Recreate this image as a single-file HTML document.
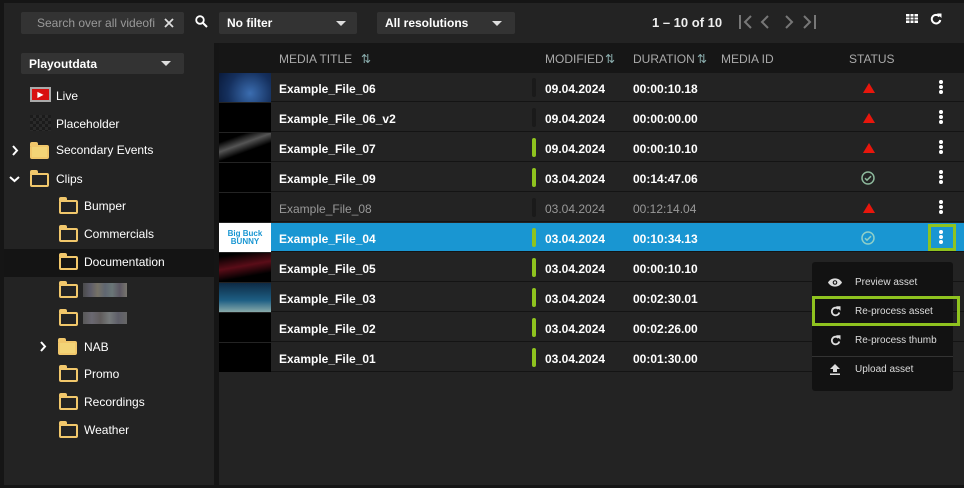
<!DOCTYPE html><html><head><style>
*{box-sizing:border-box;margin:0;padding:0}
body{width:964px;height:488px;background:#151515;font-family:"Liberation Sans",Arial,sans-serif;font-size:12px;color:#fff;position:relative;overflow:hidden}
.a{position:absolute}
.top{left:4px;top:3px;width:960px;height:40px;background:#232323}
.box{background:#333;border-radius:2px;height:22px;top:12px}
.left{left:4px;top:43px;width:210px;height:442px;background:#232323}
.tbl{left:219px;top:43px;width:745px;height:442px;background:#232323}
.hdr{left:219px;top:43px;width:745px;height:30px;background:#161616;color:#aaa;font-size:12px}
.row{left:219px;width:745px;height:29px;background:#232323;border-bottom:1px solid #141414}
.row span{position:absolute;top:9px;font-weight:bold;font-size:12px}
.th{position:absolute;left:0;top:0;width:52px;height:29px;background:#000}
.bar{position:absolute;left:313px;top:5px;width:4px;height:19px;border-radius:2px;background:#1a1a1a}
.g{background:#8fc31f}
.dots{position:absolute;left:720px;top:7px;width:4px}
.dots i{display:block;width:4px;height:4px;border-radius:2px;background:#fff;margin-bottom:1px}
.tri{position:absolute;left:644px;top:10px;width:0;height:0;border-left:6px solid transparent;border-right:6px solid transparent;border-bottom:10px solid #e8160c}
.ok{position:absolute;left:642px;top:8px}
.ti{left:60px}
.f{position:absolute;width:19px;height:14px;border:2px solid #f1c76b;border-radius:2px}
.f:before{content:"";position:absolute;left:-2px;top:-5px;width:8px;height:4px;background:#f1c76b;border-radius:2px 2px 0 0}
.ff{background:#f3d477}
.lbl{position:absolute;font-size:12px}
.menu{left:812px;top:262px;width:141px;height:129px;background:#121212;border-radius:3px}
.mi{position:absolute;left:43px;font-size:10px;color:#ddd}
</style></head><body>
<div class="a top"></div>
<div class="a box" style="left:21px;width:163px"><span style="position:absolute;left:16px;top:4px;color:#999;font-size:12px">Search over all videofi</span><svg style="position:absolute;left:143px;top:6px" width="10" height="10"><path d="M1 1l8 8M9 1l-8 8" stroke="#ddd" stroke-width="1.8"/></svg></div>
<svg class="a" style="left:195px;top:15px" width="13" height="13"><circle cx="5" cy="5" r="3.8" fill="none" stroke="#fff" stroke-width="1.8"/><path d="M8 8l4 4" stroke="#fff" stroke-width="2"/></svg>
<div class="a box" style="left:219px;width:138px"><span style="position:absolute;left:8px;top:4px;font-weight:bold">No filter</span><span style="position:absolute;left:117px;top:9px;border:5px solid transparent;border-top:5px solid #ddd"></span></div>
<div class="a box" style="left:377px;width:138px"><span style="position:absolute;left:8px;top:4px;font-weight:bold">All resolutions</span><span style="position:absolute;left:115px;top:9px;border:5px solid transparent;border-top:5px solid #ddd"></span></div>
<div class="a" style="left:652px;top:15px;font-weight:bold;font-size:13px;color:#eee">1 – 10 of 10</div>
<svg class="a" style="left:738px;top:14px" width="80" height="16" fill="none" stroke="#777" stroke-width="2"><path d="M2 1v14M13 2l-6 6 6 6M30 2l-6 6 6 6M48 2l6 6-6 6M66 2l6 6-6 6M77 1v14"/></svg>
<svg class="a" style="left:906px;top:14px" width="12" height="9"><rect width="12" height="9" fill="#fff"/><path d="M4 0v9M8 0v9M0 3h12M0 6h12" stroke="#232323" stroke-width="1"/></svg>
<svg class="a" style="left:930px;top:13px" width="12" height="12"><path d="M9.5 3.5A4.3 4.3 0 1 0 10.3 7" fill="none" stroke="#fff" stroke-width="2"/><path d="M7 0.5h4.5v4.5z" fill="#fff"/></svg>

<div class="a left"></div>
<div class="a" style="left:21px;top:53px;width:163px;height:21px;background:#333;border-radius:2px"><span style="position:absolute;left:8px;top:4px;font-weight:bold">Playoutdata</span><span style="position:absolute;left:140px;top:8px;border:5px solid transparent;border-top:5px solid #ddd"></span></div>
<div class="a" style="left:30px;top:87px;width:21px;height:15px;background:#aaa;padding:2px"><div style="width:17px;height:11px;background:#d81010;color:#fff;font-size:8px;line-height:11px;text-align:center">▶</div></div>
<div class="lbl" style="left:56px;top:89px">Live</div>
<div class="a" style="left:30px;top:115px;width:21px;height:16px;background:repeating-conic-gradient(#2a2a2a 0 25%,#1b1b1b 0 50%) 0 0/6px 6px"></div>
<div class="lbl" style="left:56px;top:117px">Placeholder</div>
<svg class="a" style="left:11px;top:145px" width="8" height="11"><path d="M2 1l4 4.5L2 10" fill="none" stroke="#fff" stroke-width="2"/></svg>
<div class="f ff" style="left:30px;top:145px"></div><div class="lbl" style="left:56px;top:143px">Secondary Events</div>
<svg class="a" style="left:9px;top:175px" width="11" height="8"><path d="M1 2l4.5 4L10 2" fill="none" stroke="#fff" stroke-width="2"/></svg>
<div class="f" style="left:30px;top:173px"></div><div class="lbl" style="left:56px;top:172px">Clips</div>
<div class="a" style="left:4px;top:249px;width:210px;height:28px;background:#141414"></div>
<div class="f" style="left:59px;top:200px"></div><div class="lbl" style="left:84px;top:199px">Bumper</div>
<div class="f" style="left:59px;top:228px"></div><div class="lbl" style="left:84px;top:227px">Commercials</div>
<div class="f" style="left:59px;top:256px"></div><div class="lbl" style="left:84px;top:255px">Documentation</div>
<div class="f" style="left:59px;top:284px"></div><div class="a" style="left:83px;top:283px;width:44px;height:14px;background:linear-gradient(90deg,#555,#6b6a7a,#8a8577,#6f7784,#7b8a8b,#6a6473,#8d8a80);opacity:.8"></div>
<div class="f" style="left:59px;top:312px"></div><div class="a" style="left:83px;top:312px;width:44px;height:12px;background:linear-gradient(90deg,#666,#7c7a85,#6f6a6a,#8a8f90,#6d6d7a,#777);opacity:.8"></div>
<svg class="a" style="left:39px;top:341px" width="8" height="11"><path d="M2 1l4 4.5L2 10" fill="none" stroke="#fff" stroke-width="2"/></svg>
<div class="f ff" style="left:58px;top:341px"></div><div class="lbl" style="left:84px;top:340px">NAB</div>
<div class="f" style="left:59px;top:368px"></div><div class="lbl" style="left:84px;top:367px">Promo</div>
<div class="f" style="left:59px;top:396px"></div><div class="lbl" style="left:84px;top:395px">Recordings</div>
<div class="f" style="left:59px;top:424px"></div><div class="lbl" style="left:84px;top:423px">Weather</div>

<div class="a tbl"></div>
<div class="a hdr"><span style="position:absolute;left:60px;top:9px">MEDIA TITLE</span><span style="position:absolute;left:142px;top:9px;color:#8aa">⇅</span><span style="position:absolute;left:326px;top:9px">MODIFIED</span><span style="position:absolute;left:386px;top:9px;color:#8aa">⇅</span><span style="position:absolute;left:414px;top:9px">DURATION</span><span style="position:absolute;left:478px;top:9px;color:#8aa">⇅</span><span style="position:absolute;left:502px;top:9px">MEDIA ID</span><span style="position:absolute;left:630px;top:9px">STATUS</span></div>

<div class="a row" style="top:73px"><div class="th" style="background:radial-gradient(circle at 60% 70%,#3b6db0,#15305e 60%,#0a1a3a)"></div><span class="ti">Example_File_06</span><div class="bar"></div><span style="left:326px">09.04.2024</span><span style="left:414px">00:00:10.18</span><div class="tri"></div><div class="dots"><i></i><i></i><i></i></div></div>
<div class="a row" style="top:103px"><div class="th"></div><span class="ti">Example_File_06_v2</span><div class="bar"></div><span style="left:326px">09.04.2024</span><span style="left:414px">00:00:00.00</span><div class="tri"></div><div class="dots"><i></i><i></i><i></i></div></div>
<div class="a row" style="top:133px"><div class="th" style="background:linear-gradient(160deg,#000 20%,#555 40%,#000 60%)"></div><span class="ti">Example_File_07</span><div class="bar g"></div><span style="left:326px">09.04.2024</span><span style="left:414px">00:00:10.10</span><div class="tri"></div><div class="dots"><i></i><i></i><i></i></div></div>
<div class="a row" style="top:163px"><div class="th"></div><span class="ti">Example_File_09</span><div class="bar g"></div><span style="left:326px">03.04.2024</span><span style="left:414px">00:14:47.06</span><svg class="ok" width="14" height="14"><circle cx="7" cy="7" r="6" fill="none" stroke="#8cb89c" stroke-width="1.5"/><path d="M4 7.2l2 2 4-4" fill="none" stroke="#8cb89c" stroke-width="1.5"/></svg><div class="dots"><i></i><i></i><i></i></div></div>
<div class="a row" style="top:193px;color:#999"><div class="th"></div><span class="ti" style="font-weight:normal">Example_File_08</span><div class="bar"></div><span style="left:326px;font-weight:normal">03.04.2024</span><span style="left:414px;font-weight:normal">00:12:14.04</span><div class="tri"></div><div class="dots"><i></i><i></i><i></i></div></div>
<div class="a row" style="top:223px;background:#1996d2"><div class="th" style="background:#fff;color:#1996d2;font-size:8px;font-weight:bold;text-align:center;line-height:8px;padding-top:7px">Big Buck<br>BUNNY</div><span class="ti">Example_File_04</span><div class="bar g"></div><span style="left:326px">03.04.2024</span><span style="left:414px">00:10:34.13</span><svg class="ok" width="14" height="14"><circle cx="7" cy="7" r="6" fill="none" stroke="#8fcfc8" stroke-width="1.5"/><path d="M4 7.2l2 2 4-4" fill="none" stroke="#8fcfc8" stroke-width="1.5"/></svg><div style="position:absolute;left:709px;top:1px;width:28px;height:27px;border:3px solid #8fc31f"></div><div class="dots"><i></i><i></i><i></i></div></div>
<div class="a row" style="top:253px"><div class="th" style="background:linear-gradient(170deg,#000 10%,#5a0d18 45%,#000 75%)"></div><span class="ti">Example_File_05</span><div class="bar g"></div><span style="left:326px">03.04.2024</span><span style="left:414px">00:00:10.10</span></div>
<div class="a row" style="top:283px"><div class="th" style="background:linear-gradient(180deg,#0d2a44,#1e5f84 60%,#8aa 100%)"></div><span class="ti">Example_File_03</span><div class="bar g"></div><span style="left:326px">03.04.2024</span><span style="left:414px">00:02:30.01</span></div>
<div class="a row" style="top:313px"><div class="th"></div><span class="ti">Example_File_02</span><div class="bar g"></div><span style="left:326px">03.04.2024</span><span style="left:414px">00:02:26.00</span></div>
<div class="a row" style="top:343px"><div class="th"></div><span class="ti">Example_File_01</span><div class="bar g"></div><span style="left:326px">03.04.2024</span><span style="left:414px">00:01:30.00</span></div>

<div class="a menu">
<svg class="a" style="left:16px;top:16px" width="14" height="9"><path d="M0 4.5C3 -1 11 -1 14 4.5 11 10 3 10 0 4.5z" fill="#ddd"/><circle cx="7" cy="4.5" r="2.3" fill="#121212"/><circle cx="7" cy="4.5" r="1.2" fill="#ddd"/></svg><div class="mi" style="top:15px">Preview asset</div>
<div class="a" style="left:0;top:34px;width:148px;height:30px;border:3px solid #8fc31f"></div>
<svg class="a" style="left:18px;top:44px" width="11" height="11"><path d="M8.5 3A3.8 3.8 0 1 0 9.3 6.5" fill="none" stroke="#ddd" stroke-width="1.8"/><path d="M6 0.3h4.5v4.5z" fill="#ddd"/></svg><div class="mi" style="top:44px">Re-process asset</div>
<svg class="a" style="left:18px;top:73px" width="11" height="11"><path d="M8.5 3A3.8 3.8 0 1 0 9.3 6.5" fill="none" stroke="#ddd" stroke-width="1.8"/><path d="M6 0.3h4.5v4.5z" fill="#ddd"/></svg><div class="mi" style="top:73px">Re-process thumb</div>
<div class="a" style="left:0;top:94px;width:141px;height:1px;background:#333"></div>
<svg class="a" style="left:18px;top:102px" width="10" height="11"><path d="M5 0L10 5H7v3H3V5H0z M0 9.5h10v1.5H0z" fill="#ddd"/></svg><div class="mi" style="top:102px">Upload asset</div>
</div>
</body></html>
